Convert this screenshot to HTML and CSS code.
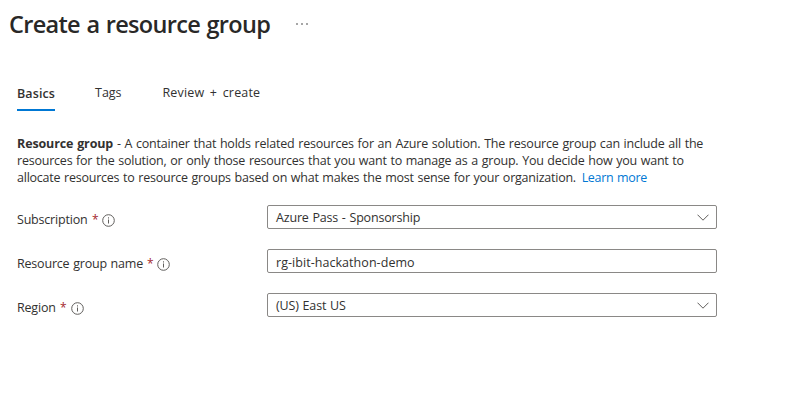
FILE: index.html
```html
<!DOCTYPE html>
<html lang="en">
<head>
<meta charset="utf-8">
<title>Create a resource group</title>
<link rel="stylesheet" href="styles.css">
</head>
<body>
<header class="header"><h1 class="title">Create a resource group</h1><span class="more"><i></i><i></i><i></i></span></header>
<nav class="tabs"><a class="tab tab-basics active">Basics</a><a class="tab tab-tags">Tags</a><a class="tab tab-review">Review + create</a></nav>
<main class="content">
<p class="intro"><span class="line"><b>Resource group</b> - A container that holds related resources for an Azure solution. The resource group can include all the</span><span class="line l2">resources for the solution, or only those resources that you want to manage as a group. You decide how you want to</span><span class="line l3">allocate resources to resource groups based on what makes the most sense for your organization. <a class="link">Learn more</a></span></p>
<div class="row"><label class="label"><span class="n1">Subscription</span><span class="req">*</span><svg class="info" viewBox="0 0 13 13"><circle cx="6.5" cy="6.5" r="5.8"/><path d="M6.5 5.5v4M6.5 3.3v1.2"/></svg></label><div class="field"><span class="v1">Azure Pass - Sponsorship</span><svg class="chev" viewBox="0 0 12 7"><path d="M.5 .7 6 6.2 11.5 .7"/></svg></div></div>
<div class="row"><label class="label"><span class="n2">Resource group name</span><span class="req">*</span><svg class="info" viewBox="0 0 13 13"><circle cx="6.5" cy="6.5" r="5.8"/><path d="M6.5 5.5v4M6.5 3.3v1.2"/></svg></label><div class="field"><span class="v2">rg-ibit-hackathon-demo</span></div></div>
<div class="row"><label class="label"><span class="n3">Region</span><span class="req">*</span><svg class="info" viewBox="0 0 13 13"><circle cx="6.5" cy="6.5" r="5.8"/><path d="M6.5 5.5v4M6.5 3.3v1.2"/></svg></label><div class="field"><span class="v3">(US) East US</span><svg class="chev" viewBox="0 0 12 7"><path d="M.5 .7 6 6.2 11.5 .7"/></svg></div></div>
</main>
</body>
</html>
```
FILE: styles.css
```css
* { box-sizing: border-box; }
body { margin: 0; background: #fff; color: #323130; font: 12.5px/17px "Open Sans", "Noto Sans", sans-serif; letter-spacing: -0.2px; word-spacing: 0.7px; }
.header { display: flex; height: 48px; padding-left: 9px; }
.title { margin: 0; width: 287px; color: #292827; font-size: 23.5px; line-height: 48px; font-weight: 600; letter-spacing: -0.68px; word-spacing: 1px; white-space: nowrap; }
.more { display: flex; gap: 3px; padding-top: 23px; }
.more i { width: 2px; height: 2px; background: #888; border-radius: 1px; }
.tabs { display: flex; padding: 33px 0 0 17px; height: 87px; }
.tab { height: 30px; line-height: 23px; white-space: nowrap; }
.tab-basics { width: 38px; margin-right: 40px; }
.tab-tags { width: 27px; margin-right: 40.5px; letter-spacing: 0; }
.tab-review { letter-spacing: 0.15px; word-spacing: 2.2px; }
.active { font-weight: 600; line-height: 25px; letter-spacing: 0.1px; border-bottom: 2px solid #0078d4; }
.content { padding-left: 17px; }
.intro { margin: 0 0 19px; }
.intro b { letter-spacing: -0.12px; }
.line { display: block; white-space: nowrap; }
.l2 { letter-spacing: -0.22px; }
.l3 { letter-spacing: -0.23px; }
.link { color: #0078d4; margin-left: 2px; letter-spacing: -0.3px; }
.row { display: flex; height: 24px; margin-bottom: 20px; }
.label { display: flex; width: 250px; align-items: center; padding-top: 5px; white-space: nowrap; }
.n1 { width: 71px; }
.n2 { width: 126px; }
.n3 { width: 40px; }
.req { width: 5px; color: #a4262c; font-size: 12px; margin: -1px 5px 0 4px; }
.n3 + .req { margin-left: 3px; margin-right: 6px; }
.info { width: 13px; height: 13px; margin-top: 1px; fill: none; stroke: #605e5c; }
.field { display: flex; width: 450px; height: 24px; border: 1px solid #8a8886; border-radius: 2px; align-items: center; justify-content: space-between; padding: 0 7px 0 8px; }
.v1 { letter-spacing: -0.18px; }
.v2 { letter-spacing: 0.05px; padding-top: 2px; }
.v3 { letter-spacing: -0.15px; }
.chev { width: 12px; height: 7px; fill: none; stroke: #605e5c; }
```
